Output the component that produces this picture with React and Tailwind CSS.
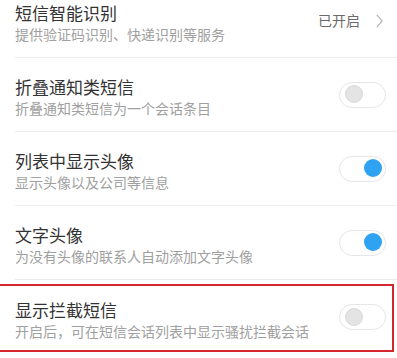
import React from "react";

function Toggle({ on }) {
  return (
    <div className="relative w-[47px] h-[26px] rounded-full border-[1.5px] border-[#e6e6e6] bg-white shrink-0">
      <div
        className={
          on
            ? "absolute top-[2.5px] right-[3px] w-[18px] h-[18px] rounded-full bg-[#2fa2f2]"
            : "absolute top-[2.5px] left-[4.5px] w-[18px] h-[18px] rounded-full bg-[#e4e4e4] border border-[#d9d9d9]"
        }
      />
    </div>
  );
}

function Row({ title, sub, right, last, children }) {
  return (
    <div className="relative pl-[15px]">
      <div
        className={
          "h-[74px] flex items-center justify-between pr-[11px] " +
          (last ? "" : "border-b border-[#ececec]")
        }
      >
        <div className="flex flex-col pt-[5px]">
          <div className="text-[17px] leading-[22px] text-[#333333]">{title}</div>
          <div className="text-[14px] leading-[20px] text-[#a0a0a0]">{sub}</div>
        </div>
        {right}
      </div>
      {children}
    </div>
  );
}

export default function App() {
  return (
    <div
      className="w-[397px] h-[358px] overflow-hidden bg-white"
      style={{ fontFamily: '"Noto Sans CJK SC", "Noto Sans", sans-serif' }}
    >
      <div className="-mt-[16px]">
        <Row
          title="短信智能识别"
          sub="提供验证码识别、快递识别等服务"
          right={
            <div className="flex items-center gap-[16px] pr-[3px]">
              <span className="text-[14px] text-[#6a6a6a]">已开启</span>
              <svg width="7" height="14" viewBox="0 0 7 14" fill="none">
                <path d="M0.8 0.8 L6.2 7 L0.8 13.2" stroke="#b5b5b5" strokeWidth="1.2" />
              </svg>
            </div>
          }
        />
        <Row title="折叠通知类短信" sub="折叠通知类短信为一个会话条目" right={<Toggle on={false} />} />
        <Row title="列表中显示头像" sub="显示头像以及公司等信息" right={<Toggle on />} />
        <Row title="文字头像" sub="为没有头像的联系人自动添加文字头像" right={<Toggle on />} />
        <Row
          title="显示拦截短信"
          sub="开启后，可在短信会话列表中显示骚扰拦截会话"
          right={<Toggle on={false} />}
          last
        >
          <div className="absolute top-[4px] left-[-3px] right-[3px] h-[68px] border-2 border-[#d3262d] pointer-events-none" />
        </Row>
      </div>
    </div>
  );
}
